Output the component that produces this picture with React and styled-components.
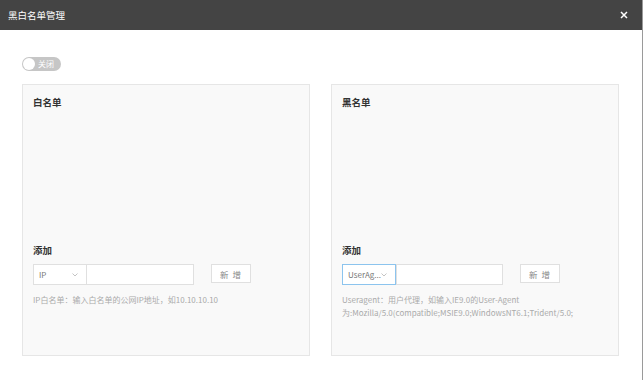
import React from "react";
import styled, { createGlobalStyle } from "styled-components";

const Global = createGlobalStyle`
  html, body { margin: 0; padding: 0; background: #9a9a9a; }
  body { font-family: "Noto Sans CJK SC", "Noto Sans", sans-serif; }
  #root { width: 642px; height: 380px; background: #fff; overflow: hidden; }
`;

const Header = styled.div`
  height: 30px;
  background: #444444;
  display: flex;
  align-items: center;
  justify-content: space-between;
  padding: 0 14px 0 8px;
`;

const Title = styled.div`
  color: #fff;
  font-size: 9.5px;
  line-height: 13px;
`;

const Close = styled.button`
  border: 0;
  background: none;
  padding: 0;
  width: 8px;
  height: 8px;
  display: flex;
  align-items: center;
  justify-content: center;
  cursor: pointer;
`;

const Body = styled.div`
  padding: 27px 22px 0;
`;

const Toggle = styled.div`
  width: 39px;
  height: 14px;
  border-radius: 7px;
  background: #c6c6c6;
  display: flex;
  align-items: center;
  padding: 0 1px;
  box-sizing: border-box;
  gap: 3px;
`;

const Knob = styled.div`
  width: 12px;
  height: 12px;
  border-radius: 50%;
  background: #fff;
`;

const ToggleText = styled.span`
  color: #fff;
  font-size: 8px;
  line-height: 12px;
`;

const Panels = styled.div`
  margin-top: 13px;
  display: grid;
  grid-template-columns: 288px 288px;
  gap: 21px;
`;

const Panel = styled.div`
  height: 272px;
  box-sizing: border-box;
  background: #f9f9f9;
  border: 1px solid #e6e6e6;
  padding: 11px 10px 0;
`;

const PanelTitle = styled.div`
  font-size: 9.5px;
  font-weight: 700;
  color: #333;
  line-height: 13px;
`;

const ListArea = styled.div`
  height: 135px;
`;

const Label = styled(PanelTitle)``;

const Row = styled.div`
  margin-top: 7px;
  display: flex;
  align-items: flex-start;
`;

const Select = styled.div`
  width: 54px;
  height: 21px;
  box-sizing: border-box;
  background: #fff;
  border: 1px solid ${(p) => (p.$focused ? "#8cc4ee" : "#e0e0e0")};
  display: flex;
  align-items: center;
  justify-content: space-between;
  padding: 0 8px 0 5px;
  font-size: 8px;
  color: #777;
`;

const Input = styled.div`
  width: 107px;
  height: 21px;
  box-sizing: border-box;
  background: #fff;
  border: 1px solid #e0e0e0;
  border-left-width: ${(p) => (p.$joined ? "0" : "1px")};
`;

const AddButton = styled.button`
  margin-left: 17px;
  width: 40px;
  height: 19px;
  box-sizing: border-box;
  background: #fff;
  border: 1px solid #e0e0e0;
  font-family: inherit;
  font-size: 8.5px;
  color: #888;
  padding: 0;
  letter-spacing: 1px;
`;

const Hint = styled.div`
  margin-top: 8px;
  font-size: 8px;
  line-height: 13px;
  color: #aaa;
  white-space: nowrap;
`;

const Chevron = () => (
  <svg width="6" height="4" viewBox="0 0 6 4">
    <path d="M0.5 0.5 L3 3 L5.5 0.5" fill="none" stroke="#b5b5b5" strokeWidth="0.8" />
  </svg>
);

const CloseIcon = () => (
  <svg width="8" height="8" viewBox="0 0 8 8">
    <path d="M1 1 L7 7 M7 1 L1 7" stroke="#fff" strokeWidth="1.5" />
  </svg>
);

function ListPanel({ title, option, focused, hint }) {
  return (
    <Panel>
      <PanelTitle>{title}</PanelTitle>
      <ListArea />
      <Label>添加</Label>
      <Row>
        <Select $focused={focused}>
          <span>{option}</span>
          <Chevron />
        </Select>
        <Input $joined={!focused} />
        <AddButton>新 增</AddButton>
      </Row>
      <Hint>{hint}</Hint>
    </Panel>
  );
}

export default function App() {
  return (
    <>
      <Global />
      <Header>
        <Title>黑白名单管理</Title>
        <Close>
          <CloseIcon />
        </Close>
      </Header>
      <Body>
        <Toggle>
          <Knob />
          <ToggleText>关闭</ToggleText>
        </Toggle>
        <Panels>
          <ListPanel
            title="白名单"
            option="IP"
            hint="IP白名单：输入白名单的公网IP地址，如10.10.10.10"
          />
          <ListPanel
            title="黑名单"
            option="UserAg..."
            focused
            hint={
              <>
                Useragent：用户代理，如输入IE9.0的User-Agent
                <br />
                为:Mozilla/5.0(compatible;MSIE9.0;WindowsNT6.1;Trident/5.0;
              </>
            }
          />
        </Panels>
      </Body>
    </>
  );
}
